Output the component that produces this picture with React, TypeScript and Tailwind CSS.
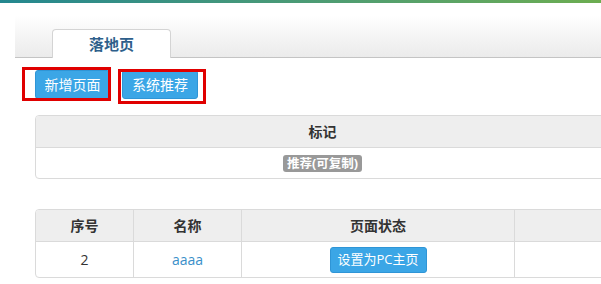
export default function App() {
  return (
    <div className="relative w-[601px] h-[284px] overflow-hidden bg-white font-['Open_Sans','Noto_Sans_CJK_SC',sans-serif] text-[#333]">
      {/* top strip */}
      <div className="h-[3px] bg-linear-to-r from-[#23878f] to-[#6cad50]" />

      <div className="w-[640px] pl-[15px] pt-[12px]">
        {/* tab bar */}
        <div className="h-[43px] border-b border-[#c4c4c4] bg-linear-to-b from-white to-[#ebebeb] flex items-end pl-[37px]">
          <div className="w-[119px] h-[29px] -mb-px bg-white border border-b-0 border-[#d4d4d4] rounded-t-[4px] flex items-center justify-center text-[15px] font-bold text-[#2e5f8b]">
            落地页
          </div>
        </div>

        <div className="pl-[20px]">
          {/* actions */}
          <div className="mt-[12px] flex gap-[12px]">
            <button className="w-[75px] h-[29px] rounded-[3px] bg-[#3ba6e6] border border-[#2f95d6] text-white text-[14px]">
              新增页面
            </button>
            <button className="w-[76px] h-[29px] rounded-[3px] bg-[#3ba6e6] border border-[#2f95d6] text-white text-[14px]">
              系统推荐
            </button>
          </div>

          {/* mark table */}
          <div className="mt-[16px] w-[575px] border border-[#dadada] rounded-[4px] overflow-hidden">
            <div className="h-[32px] bg-[#eeeeee] border-b border-[#dadada] flex items-center justify-center text-[14px] font-bold">
              标记
            </div>
            <div className="h-[30px] flex items-center justify-center">
              <span className="w-[79px] h-[17px] rounded-[3px] bg-[#999999] text-white text-[12.5px] font-bold leading-[17px] text-center">
                推荐(可复制)
              </span>
            </div>
          </div>

          {/* page list */}
          <div className="mt-[30px] w-[575px] border border-[#dadada] rounded-[4px] overflow-hidden">
            <div className="grid grid-cols-[98px_108px_273px_1fr] h-[32px] bg-[#eeeeee] border-b border-[#dadada] text-[14px] font-bold">
              <div className="border-r border-[#dadada] flex items-center justify-center">序号</div>
              <div className="border-r border-[#dadada] flex items-center justify-center">名称</div>
              <div className="border-r border-[#dadada] flex items-center justify-center">页面状态</div>
              <div />
            </div>
            <div className="grid grid-cols-[98px_108px_273px_1fr] h-[35px] text-[14px]">
              <div className="border-r border-[#dadada] flex items-center justify-center">2</div>
              <div className="border-r border-[#dadada] flex items-center justify-center text-[#3a8fc9]">aaaa</div>
              <div className="border-r border-[#dadada] flex items-center justify-center">
                <button className="w-[97px] h-[26px] rounded-[3px] bg-[#3ba6e6] border border-[#2f95d6] text-white text-[13px]">
                  设置为PC主页
                </button>
              </div>
              <div />
            </div>
          </div>
        </div>
      </div>

      {/* annotation boxes */}
      <div className="absolute left-[22px] top-[67px] w-[89px] h-[34px] border-[3px] border-[#e00000]" />
      <div className="absolute left-[118px] top-[69px] w-[88px] h-[35px] border-[3px] border-[#e00000]" />
    </div>
  );
}
